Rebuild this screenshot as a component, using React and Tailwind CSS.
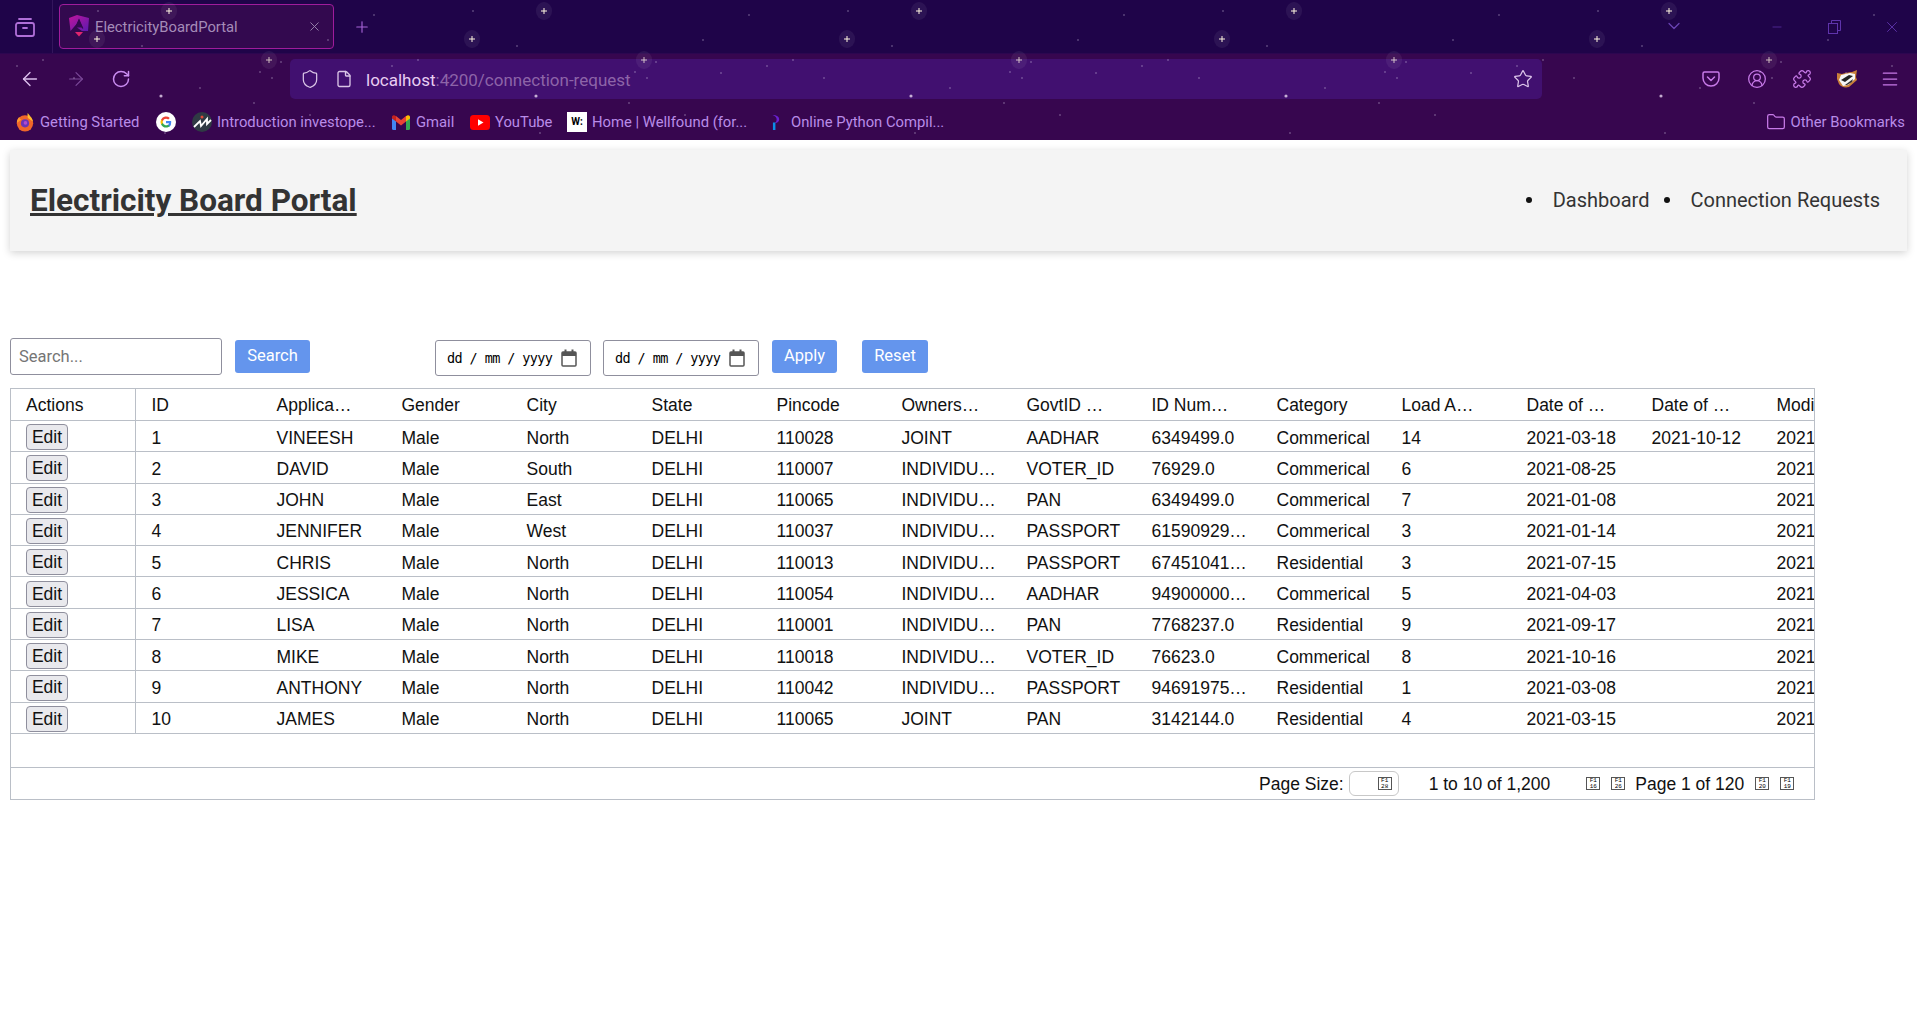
import React from "react";
import { ArrowLeft, ArrowRight, RotateCw, Shield, File, Star, Menu, Puzzle, Folder, X, Plus, ChevronDown, Minus, CircleUserRound } from "lucide-react";

const big = [[97, 39], [169, 11], [269, 60]];
const small = [[98, 11], [374, 15], [142, 46], [328, 40], [17, 66], [272, 78], [281, 62], [260, 72], [74, 78], [346, 73], [161, 96], [254, 103], [165, 133], [43, 60], [200, 88], [310, 115]];

function Stars() {
  return (
    <svg className="absolute inset-0 pointer-events-none" width="1917" height="140">
      <defs>
        <pattern id="sky" patternUnits="userSpaceOnUse" width="375" height="140">
          {big.map(([x, y], i) => (
            <g key={i}>
              <ellipse cx={x} cy={y} rx="8" ry="9" fill="#ffffff" opacity="0.06" />
              <path d={`M${x - 3} ${y}H${x + 3}M${x} ${y - 3}V${y + 3}`} stroke="#fff6e0" strokeWidth="1" opacity={y > 54 ? 0.75 : 1} />
            </g>
          ))}
          {small.map(([x, y], i) => (
            <rect key={i} x={x - 0.6} y={y - 0.6} width="1.2" height="1.2" fill="#e8dcf5" opacity="0.6" />
          ))}
          <circle cx="161" cy="96" r="1.6" fill="#f0e0f5" opacity="0.7" />
        </pattern>
      </defs>
      <rect width="1917" height="140" fill="url(#sky)" />
    </svg>
  );
}

const AngularIcon = () => (
  <svg width="20" height="24" viewBox="0 0 20 24" className="flex-none">
    <defs>
      <linearGradient id="ang" x1="0" y1="0" x2="1" y2="1">
        <stop offset="0" stopColor="#c2149c" />
        <stop offset="1" stopColor="#5a1ab0" />
      </linearGradient>
    </defs>
    <path d="M8 0 0 3l1.500 13L8 8.500 10 4l3.500 8.500H8L13 16 19 16 20 3Z" fill="url(#ang)" />
    <path d="M6 17h8l-4 4.500Z" fill="#e0266f" />
    <path d="M6.200 13.500 10 5l3.800 8.500" fill="none" stroke="#33094f" strokeWidth="1.200" />
  </svg>
);

const FirefoxIcon = () => (
  <svg width="20" height="20" viewBox="0 0 20 22" className="flex-none">
    <circle cx="10" cy="12.500" r="9" fill="#f0662a" />
    <path d="M13 1c2 3 6 6 6 11 0-3-4-3-6-6 0-2-.5-3 0-5Z" fill="#ffbd2e" />
    <path d="M1 12c0-3 1-5 3-6.500-.5 2 1 2.500 2 3Z" fill="#ff9a2e" />
    <circle cx="10" cy="12.500" r="4.500" fill="#6a34b8" />
    <circle cx="10.500" cy="12" r="2" fill="#b04ad0" />
  </svg>
);

const GoogleIcon = () => (
  <svg width="20" height="20" viewBox="0 0 20 20" className="flex-none">
    <circle cx="10" cy="10" r="10" fill="#ffffff" />
    <path d="M15.200 10.200c0-.4 0-.8-.1-1.200H10v2.300h3a2.600 2.600 0 0 1-1.100 1.700v1.400h1.800a5.500 5.500 0 0 0 1.500-4.200Z" fill="#4285f4" />
    <path d="M10 15.600c1.500 0 2.700-.5 3.700-1.400L11.900 12.800a3.400 3.400 0 0 1-5-1.800H5.100v1.500A5.600 5.600 0 0 0 10 15.600Z" fill="#34a853" />
    <path d="M6.900 11a3.300 3.300 0 0 1 0-2.100V7.400H5.100a5.600 5.600 0 0 0 0 5.100Z" fill="#fbbc05" />
    <path d="M10 6.700c.8 0 1.600.3 2.200.8l1.600-1.600A5.600 5.600 0 0 0 5.100 7.400L6.900 8.900A3.300 3.300 0 0 1 10 6.700Z" fill="#ea4335" />
  </svg>
);

const InvestIcon = () => (
  <svg width="20" height="20" viewBox="0 0 20 20" className="flex-none">
    <circle cx="10" cy="10" r="10" fill="#2f3a44" />
    <path d="M2 15 8 9l1 5 6-7v5l4-4" fill="none" stroke="#ffffff" strokeWidth="1.800" />
    <circle cx="10" cy="5" r="1.500" fill="#e04a3a" />
  </svg>
);

const GmailIcon = () => (
  <svg width="18" height="15" viewBox="0 0 18 15" className="flex-none">
    <path d="M0 2v11.500A1.500 1.500 0 0 0 1.500 15H4V6Z" fill="#4285f4" />
    <path d="M18 2v11.500a1.500 1.500 0 0 1-1.500 1.500H14V6Z" fill="#34a853" />
    <path d="M14 1v5.500l4-3V2c0-1.500-1.700-2.300-3-1.300Z" fill="#fbbc04" />
    <path d="M4 6.500V1l5 4 5-4v5.500l-5 4Z" fill="#ea4335" />
    <path d="M0 2v1.500l4 3V1L3 .7C1.700-.3 0 .5 0 2Z" fill="#c5221f" />
  </svg>
);

const YoutubeIcon = () => (
  <svg width="20" height="15" viewBox="0 0 20 15" className="flex-none">
    <rect width="20" height="15" rx="3.500" fill="#f00" />
    <path d="M8 4.300v6.400l5.500-3.200Z" fill="#fff" />
  </svg>
);

const PythonIcon = () => (
  <svg width="10" height="15" viewBox="0 0 12 18" className="flex-none">
    <path d="M3 0c5 0 8 2 8 5s-3 5-6 5c2-1 3-3 3-5S6 1 3 0Z" fill="#6a1fd0" />
    <rect x="3.500" y="9" width="3" height="9" fill="#0a8fe8" />
  </svg>
);

const PocketIcon = () => (
  <svg width="18" height="18" viewBox="0 0 18 18" fill="none" stroke="#c77ae8" strokeWidth="1.500" strokeLinecap="round" strokeLinejoin="round">
    <path d="M2.500 2h13A1.500 1.500 0 0 1 17 3.500V8A8 8 0 0 1 1 8V3.500A1.500 1.500 0 0 1 2.500 2Z" />
    <path d="m5.500 7 3.500 3.500L12.500 7" />
  </svg>
);

const FoxIcon = () => (
  <svg width="22" height="20" viewBox="0 0 22 20">
    <path d="M1 4 6 5c3-1 7-2 10-2l5-2-1 7 1 3-8 7c-4 1-8 0-10-3L1 10Z" fill="#c9803a" />
    <path d="M3 11 5 6l9-2 5 1 0 5-7 6-5 1Z" fill="#f6f6f6" />
    <path d="m5 11 8-5 4 1-8 6Z" fill="#222222" />
    <path d="m9 16 8-6-1 3-5 3Z" fill="#333333" />
  </svg>
);

const ArchiveIcon = () => (
  <svg width="20" height="20" viewBox="0 0 20 20" fill="none" stroke="#b06fd8" strokeWidth="1.800" strokeLinecap="round" strokeLinejoin="round">
    <rect x="1" y="6" width="18" height="13" rx="2" />
    <path d="M4 2h12M8 11h4" />
  </svg>
);

const RestoreIcon = () => (
  <svg width="13" height="14" viewBox="0 0 13 14" fill="none" stroke="#5f34ac" strokeWidth="1">
    <rect x="0.500" y="3.500" width="9" height="10" />
    <path d="M3.500 3V.5h9v10H10" />
  </svg>
);

const CalendarIcon = () => (
  <svg width="16" height="18" viewBox="0 0 16 18" className="flex-none">
    <rect x="1" y="3" width="14" height="14" rx="1" fill="none" stroke="#555555" strokeWidth="1.500" />
    <rect x="1" y="3" width="14" height="4" fill="#555555" />
    <rect x="3.500" y="0.500" width="2" height="3" fill="#555555" />
    <rect x="10.500" y="0.500" width="2" height="3" fill="#555555" />
  </svg>
);

const bookmarks = [
  { icon: <FirefoxIcon />, label: "Getting Started", w: "w-[101px]", gap: "ml-[15px]", ig: "ml-[5px]" },
  { icon: <GoogleIcon />, label: null, gap: "ml-[15px]" },
  { icon: <InvestIcon />, label: "Introduction investope...", w: "w-[161px]", gap: "ml-[16px]", ig: "ml-[5px]" },
  { icon: <GmailIcon />, label: "Gmail", w: "w-[38px]", gap: "ml-[14px]", ig: "ml-[6px]" },
  { icon: <YoutubeIcon />, label: "YouTube", w: "w-[58px]", gap: "ml-[16px]", ig: "ml-[5px]" },
  { icon: <span className="flex-none w-[20px] h-[20px] bg-white text-black text-[10px] leading-[20px] font-bold text-center">W:</span>, label: "Home | Wellfound (for...", w: "w-[160px]", gap: "ml-[14px]", ig: "ml-[5px]" },
  { icon: <PythonIcon />, label: "Online Python Compil...", w: "w-[155px]", gap: "ml-[18px]", ig: "ml-[11px]" },
];

function BrowserChrome() {
  return (
    <div className="relative h-[140px] overflow-hidden font-['Roboto',sans-serif]">
      <div className="flex items-center h-[54px] bg-[#1f0449] border-b border-[#2c0650]">
        <div className="flex items-center justify-center w-[53px] h-full border-r border-[#33155c] pr-[3px] flex-none">
          <ArchiveIcon />
        </div>
        <div className="flex items-center flex-none w-[275px] h-[45px] ml-[6px] pl-[9px] pr-[11px] rounded-[4px] border border-[#a01c9c] bg-[#33094f]">
          <AngularIcon />
          <span className="ml-[6px] pt-[2px] text-[14.800px] text-[#a58cb8] flex-1 whitespace-nowrap">ElectricityBoardPortal</span>
          <X size={15} color="#9a84ad" strokeWidth={1.5} />
        </div>
        <div className="ml-[19px]"><Plus size={18} color="#a864d8" strokeWidth={1.5} /></div>
        <div className="flex-1" />
        <ChevronDown size={20} color="#6a44b4" strokeWidth={1.5} className="mr-[86px] -mt-[2px]" />
        <Minus size={14} color="#5f34ac" strokeWidth={1.2} className="mr-[44px]" />
        <RestoreIcon />
        <X size={18} color="#5f34ac" strokeWidth={1.2} className="ml-[42px] mr-[16px]" />
      </div>
      <div className="flex items-center h-[50px] bg-[#37064f]">
        <ArrowLeft size={22} color="#dcc0ee" strokeWidth={1.5} className="ml-[19px]" />
        <ArrowRight size={22} color="#7c4a9a" strokeWidth={1.2} className="ml-[24px]" />
        <RotateCw size={20} color="#c98cf0" strokeWidth={1.8} className="ml-[24px]" />
        <div className="flex items-center w-[1252px] h-[40px] ml-[159px] rounded-[5px] bg-[#411070] flex-none">
          <Shield size={20} color="#d9c4e6" strokeWidth={1.5} className="ml-[10px]" />
          <File size={18} color="#d9c4e6" strokeWidth={1.8} className="ml-[15px]" />
          <span className="ml-[13px] pt-[4px] text-[17px] text-[#e8cdf2] whitespace-nowrap">localhost<span className="text-[#8d64a8]">:4200/connection-request</span></span>
          <div className="flex-1" />
          <Star size={20} color="#dcc4ea" strokeWidth={1.5} className="mr-[9px]" />
        </div>
        <div className="flex items-center ml-[160px]">
          <PocketIcon />
          <CircleUserRound size={20} color="#c77ae8" strokeWidth={1.5} className="ml-[27px]" />
          <Puzzle size={20} color="#c77ae8" strokeWidth={1.5} className="ml-[25px]" />
          <span className="ml-[24px]"><FoxIcon /></span>
          <Menu size={20} color="#c77ae8" strokeWidth={1.5} className="ml-[22px]" />
        </div>
      </div>
      <div className="flex items-center h-[36px] bg-[#37064f] text-[14.800px] text-[#b98ce8]">
        {bookmarks.map((b, i) => (
          <div key={i} className={`flex items-center ${b.gap}`}>
            {b.icon}
            {b.label && <span className={`${b.ig} ${b.w} whitespace-nowrap`}>{b.label}</span>}
          </div>
        ))}
        <div className="flex-1" />
        <Folder size={20} color="#c77ae8" strokeWidth={1.5} />
        <span className="ml-[5px] mr-[12px] whitespace-nowrap">Other Bookmarks</span>
      </div>
      <Stars />
    </div>
  );
}

const headers = ["Actions", "ID", "Applica…", "Gender", "City", "State", "Pincode", "Owners…", "GovtID …", "ID Num…", "Category", "Load A…", "Date of …", "Date of …", "Modi"];

const rows = [
  ["1", "VINEESH", "Male", "North", "DELHI", "110028", "JOINT", "AADHAR", "6349499.0", "Commerical", "14", "2021-03-18", "2021-10-12", "2021"],
  ["2", "DAVID", "Male", "South", "DELHI", "110007", "INDIVIDU…", "VOTER_ID", "76929.0", "Commerical", "6", "2021-08-25", "", "2021"],
  ["3", "JOHN", "Male", "East", "DELHI", "110065", "INDIVIDU…", "PAN", "6349499.0", "Commerical", "7", "2021-01-08", "", "2021"],
  ["4", "JENNIFER", "Male", "West", "DELHI", "110037", "INDIVIDU…", "PASSPORT", "61590929…", "Commerical", "3", "2021-01-14", "", "2021"],
  ["5", "CHRIS", "Male", "North", "DELHI", "110013", "INDIVIDU…", "PASSPORT", "67451041…", "Residential", "3", "2021-07-15", "", "2021"],
  ["6", "JESSICA", "Male", "North", "DELHI", "110054", "INDIVIDU…", "AADHAR", "94900000…", "Commerical", "5", "2021-04-03", "", "2021"],
  ["7", "LISA", "Male", "North", "DELHI", "110001", "INDIVIDU…", "PAN", "7768237.0", "Residential", "9", "2021-09-17", "", "2021"],
  ["8", "MIKE", "Male", "North", "DELHI", "110018", "INDIVIDU…", "VOTER_ID", "76623.0", "Commerical", "8", "2021-10-16", "", "2021"],
  ["9", "ANTHONY", "Male", "North", "DELHI", "110042", "INDIVIDU…", "PASSPORT", "94691975…", "Residential", "1", "2021-03-08", "", "2021"],
  ["10", "JAMES", "Male", "North", "DELHI", "110065", "JOINT", "PAN", "3142144.0", "Residential", "4", "2021-03-15", "", "2021"],
];

const Tofu = ({ a, b, className = "" }) => (
  <span className={`flex flex-col items-center justify-center flex-none w-[14px] h-[13px] border border-[#555555] font-['Liberation_Mono',monospace] text-[6px] leading-[5.500px] text-black ${className}`}>
    <span>{a}</span>
    <span>{b}</span>
  </span>
);

const Cell = ({ children, top = "pt-[3px]" }) => (
  <div className={`flex-none w-[125px] pl-[16px] ${top} whitespace-nowrap overflow-hidden`}>{children}</div>
);

function Grid() {
  return (
    <div className="w-[1805px] h-[412px] ml-[10px] mt-[12px] border border-[#babfc7] bg-white text-[17.500px] text-[#111111] font-['Liberation_Sans',Arial,sans-serif] overflow-hidden flex flex-col">
      <div className="flex items-center h-[32px] border-b border-[#babfc7] flex-none">
        <div className="flex-none flex items-center w-[124.500px] h-full pl-[15px] pt-[2px] border-r border-[#babfc7]">Actions</div>
        {headers.slice(1).map((h, i) => <Cell key={i} top="pt-[2px]">{h}</Cell>)}
      </div>
      {rows.map((r, i) => (
        <div key={i} className="flex items-center h-[31.300px] border-b border-[#babfc7] flex-none">
          <div className="flex-none flex items-center w-[124.500px] h-full pl-[15px] border-r border-[#babfc7]">
            <button className="w-[42px] h-[26px] mt-[2px] flex items-center justify-center rounded-[4px] border border-[#8f8f9d] bg-[#e9e9ed]">Edit</button>
          </div>
          {r.map((c, j) => <Cell key={j}>{c}</Cell>)}
        </div>
      ))}
      <div className="flex-1" />
      <div className="flex items-center h-[32px] flex-none border-t border-[#babfc7]">
        <span className="ml-[1248px] pt-[2px] whitespace-nowrap">Page Size:</span>
        <span className="flex items-center justify-end w-[50px] h-[25px] ml-[5px] pr-[6px] rounded-[6px] border border-[#c8c8c8]"><Tofu a="F1" b="28" /></span>
        <span className="ml-[30px] pt-[2px] whitespace-nowrap">1 to 10 of 1,200</span>
        <Tofu a="F1" b="16" className="ml-[36px]" />
        <Tofu a="F1" b="26" className="ml-[11px]" />
        <span className="ml-[10px] pt-[2px] whitespace-nowrap">Page 1 of 120</span>
        <Tofu a="F1" b="20" className="ml-[11px]" />
        <Tofu a="F1" b="19" className="ml-[11px]" />
      </div>
    </div>
  );
}

const DateBox = ({ className }) => (
  <div className={`flex items-center justify-between w-[156px] h-[36px] mt-[2px] pl-[11px] pr-[13px] rounded-[3px] border border-[#8f8f9d] bg-white ${className}`}>
    <span className="font-['DejaVu_Sans_Mono',monospace] text-[13.500px] tracking-[-0.600px] text-black whitespace-nowrap">dd / mm / yyyy</span>
    <CalendarIcon />
  </div>
);

const Blue = ({ className, children }) => (
  <button className={`h-[33px] mt-[2px] rounded-[3px] bg-[#6495ed] text-white text-[16.500px] font-['Roboto',sans-serif] ${className}`}>{children}</button>
);

export default function App() {
  return (
    <div className="w-[1917px] h-[1011px] bg-white overflow-hidden">
      <BrowserChrome />
      <div className="flex items-center justify-between h-[101px] mx-[10px] mt-[10px] pl-[20px] pr-[27px] bg-[#f4f4f4] shadow-[0_2px_8px_rgba(0,0,0,0.18)] font-['Roboto',sans-serif] text-[#333333]">
        <h1 className="text-[31.500px] font-bold underline leading-none mt-[1px]">Electricity Board Portal</h1>
        <div className="flex items-center text-[20px] -mt-[2px]">
          <span className="w-[6px] h-[6px] rounded-full bg-[#111111] mr-[21px]" />
          <span>Dashboard</span>
          <span className="w-[6px] h-[6px] rounded-full bg-[#111111] ml-[15px] mr-[20px]" />
          <span>Connection Requests</span>
        </div>
      </div>
      <div className="flex items-start mt-[87px] ml-[10px] h-[38px] font-['Roboto',sans-serif]">
        <input placeholder="Search..." className="w-[212px] h-[37px] px-[8px] rounded-[3px] border border-[#8f8f9d] text-[16.500px] placeholder:text-[#757575] outline-none" />
        <Blue className="w-[75px] ml-[13px]">Search</Blue>
        <DateBox className="ml-[125px]" />
        <DateBox className="ml-[12px]" />
        <Blue className="w-[65px] ml-[13px]">Apply</Blue>
        <Blue className="w-[66px] ml-[25px]">Reset</Blue>
      </div>
      <Grid />
    </div>
  );
}
